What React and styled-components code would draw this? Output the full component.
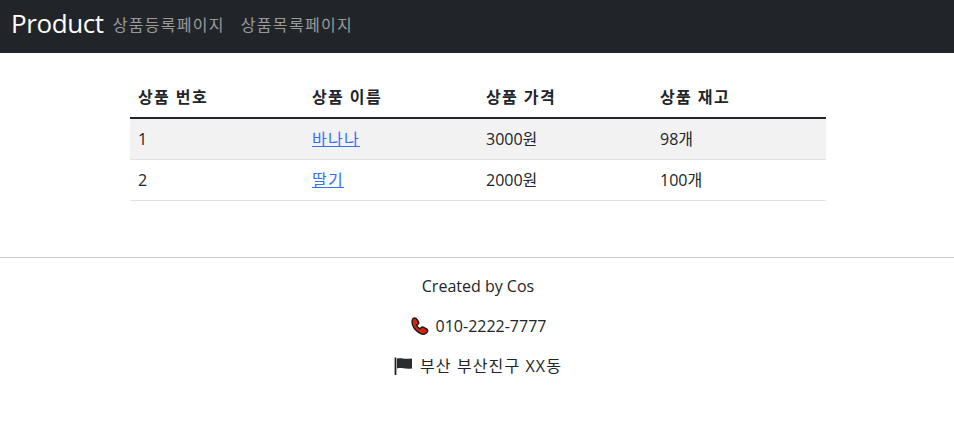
import React from "react";
import styled, { createGlobalStyle } from "styled-components";

const products = [
  { id: 1, name: "바나나", price: 3000, qty: 98 },
  { id: 2, name: "딸기", price: 2000, qty: 100 },
];

const GlobalStyle = createGlobalStyle`
  * { box-sizing: border-box; }
  body {
    margin: 0;
    background: #fff;
    color: #212529;
    font-family: "Open Sans", "Noto Sans CJK KR", sans-serif;
    font-size: 16px;
    line-height: 24px;
  }
`;

const Navbar = styled.nav`
  height: 53px;
  background: #212529;
  display: flex;
  align-items: center;
  padding: 0 12px 4px 11px;
`;

const Brand = styled.a`
  color: #fff;
  font-size: 26px;
  line-height: 36px;
  margin: 0 1px 4px 0;
  text-decoration: none;
  letter-spacing: -0.4px;
`;

const NavLinks = styled.div`
  display: flex;
`;

const NavItem = styled.a`
  color: rgba(255, 255, 255, 0.55);
  padding: 8px;
  text-decoration: none;
  letter-spacing: 1.3px;
`;

const Container = styled.main`
  width: 722px;
  margin: 24px auto 0;
  padding: 0 12px 40px 14px;
`;

const Table = styled.table`
  width: 100%;
  table-layout: fixed;
  border-collapse: collapse;
  margin-bottom: 16px;
`;

const HeadCell = styled.th`
  padding: 8px;
  text-align: left;
  font-weight: 700;
  letter-spacing: 1.4px;
  border-bottom: 2px solid #212529;
`;

const Row = styled.tr`
  background: ${(p) => (p.$striped ? "#f2f2f2" : "#fff")};
`;

const Cell = styled.td`
  padding: 8px;
  border-bottom: 1px solid #dee2e6;
`;

const ItemLink = styled.a`
  color: #3470fd;
  text-decoration: underline;
  letter-spacing: 1.3px;
`;

const Footer = styled.footer`
  border-top: 1px solid #ccc;
  padding: 16px 0 16px 2px;
  text-align: center;
`;

const Line = styled.p`
  margin: 0 0 16px;
  letter-spacing: ${(p) => p.$spacing || "0"};
`;

const Icon = styled.svg`
  display: inline-block;
  vertical-align: -3px;
  margin-right: ${(p) => p.$gap};
`;

const PhoneIcon = () => (
  <Icon $gap="7px" width="19" height="18" viewBox="0 0 19 18">
    <path
      d="M3 1.5 C4.5 0.5 6 1 7 2.5 L8.5 5 C9 6 8.5 7 7.5 7.5 L6.5 8 C7.2 9.8 8.5 11 10 11.8 L11 10.7 C11.8 10 12.8 9.9 13.7 10.4 L16.5 12 C17.8 12.8 18 14 17.2 15 L16 16.2 C14 17.8 10.5 17.3 6.8 14 C3 10.5 0.8 5.5 3 1.5 Z"
      fill="#d9230f"
      stroke="#1a1a1a"
      strokeWidth="1.5"
      strokeLinejoin="round"
    />
  </Icon>
);

const FlagIcon = () => (
  <Icon $gap="8px" width="18" height="18" viewBox="0 0 18 18">
    <path d="M1.5 0.5 V18" stroke="#222" strokeWidth="1.8" fill="none" />
    <path d="M3 1.5 C7 0.5 10 2.5 18 1.5 V11.5 C10 12.5 7 10 3 11.5 Z" fill="#2a2d2f" />
  </Icon>
);

const App = () => {
  return (
    <>
      <GlobalStyle />
      <Navbar>
        <Brand href="#">Product</Brand>
        <NavLinks>
          <NavItem href="#">상품등록페이지</NavItem>
          <NavItem href="#">상품목록페이지</NavItem>
        </NavLinks>
      </Navbar>
      <Container>
        <Table>
          <thead>
            <tr>
              <HeadCell>상품 번호</HeadCell>
              <HeadCell>상품 이름</HeadCell>
              <HeadCell>상품 가격</HeadCell>
              <HeadCell>상품 재고</HeadCell>
            </tr>
          </thead>
          <tbody>
            {products.map((product, index) => (
              <Row key={product.id} $striped={index % 2 === 0}>
                <Cell>{product.id}</Cell>
                <Cell>
                  <ItemLink href="#">{product.name}</ItemLink>
                </Cell>
                <Cell>{product.price}원</Cell>
                <Cell>{product.qty}개</Cell>
              </Row>
            ))}
          </tbody>
        </Table>
      </Container>
      <Footer>
        <Line>Created by Cos</Line>
        <Line>
          <PhoneIcon />
          010-2222-7777
        </Line>
        <Line $spacing="1.1px">
          <FlagIcon />
          부산 부산진구 XX동
        </Line>
      </Footer>
    </>
  );
};

export default App;
